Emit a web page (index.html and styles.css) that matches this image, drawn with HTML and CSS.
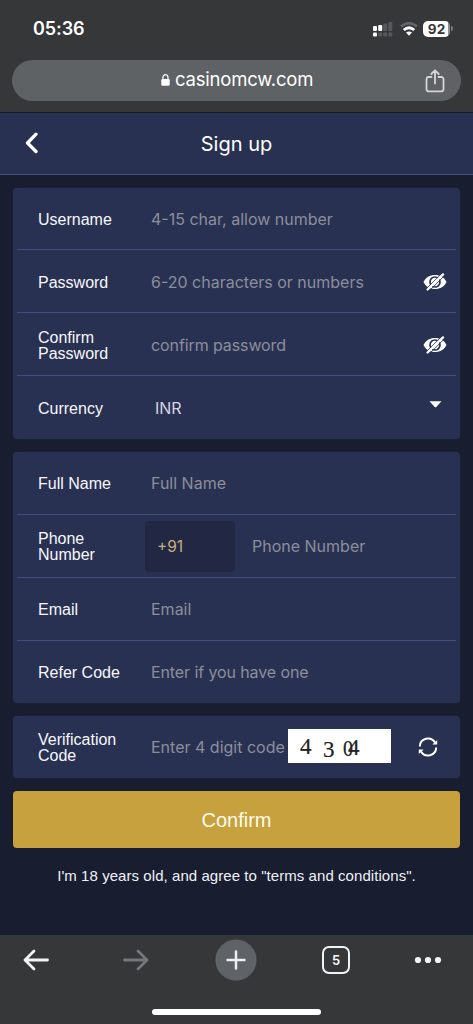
FILE: index.html
```html
<!DOCTYPE html>
<html lang="en">
<head>
<meta charset="utf-8">
<title>Sign up</title>
<link rel="stylesheet" href="styles.css">
</head>
<body>
<div class="phone">
  <div class="chrome-top">
    <div class="status">
      <span class="clock">05:36</span>
      <svg class="signal" width="20" height="16" viewBox="0 0 20 16">
        <g fill="#fff"><rect x="0" y="5" width="4" height="5" rx="1"/><rect x="5.2" y="4" width="4" height="6" rx="1"/><rect x="0" y="11.5" width="4" height="4" rx="1"/></g>
        <g fill="#55595c"><rect x="10.2" y="2.5" width="4" height="7.5" rx="1"/><rect x="15.3" y="1" width="4" height="9" rx="1"/><rect x="5.2" y="11.5" width="4" height="4" rx="1"/><rect x="10.2" y="11.5" width="4" height="4" rx="1"/><rect x="15.3" y="11.5" width="4" height="4" rx="1"/></g>
      </svg>
      <svg class="wifi" width="18" height="14" viewBox="0 0 18 14">
        <path d="M1 4.6Q9-2.2 17 4.6" fill="none" stroke="#62666a" stroke-width="2.6"/>
        <path d="M3.800 8Q9 3.400 14.200 8" fill="none" stroke="#fff" stroke-width="3"/>
        <path d="M9 13.800 6 10.600Q9 8.400 12 10.600Z" fill="#fff"/>
      </svg>
      <span class="battery">92</span><span class="battery-tip"></span>
    </div>
    <div class="address">
      <span class="address-site">
        <svg width="9" height="12" viewBox="0 0 9 12"><rect x="0.3" y="5" width="8.4" height="6.8" rx="1.2" fill="#fff"/><path d="M2 5.4V3.2a2.5 2.5 0 0 1 5 0v2.2" fill="none" stroke="#fff" stroke-width="1.2"/></svg>
        <span class="domain">casinomcw.com</span>
      </span>
      <svg class="share" width="20" height="24" viewBox="0 0 20 24" fill="none" stroke="#d4d6d8" stroke-width="1.8" stroke-linecap="round" stroke-linejoin="round"><path d="M6.5 8H3.2A2.2 2.2 0 0 0 1.500 10.2v10A2.2 2.2 0 0 0 3.700 22.400h12.600a2.200 2.200 0 0 0 2.200-2.200v-10A2.200 2.200 0 0 0 16.300 8H13.500M10 14.500V1.500M6.300 5 10 1.300 13.700 5"/></svg>
    </div>
  </div>

  <header class="title-bar">
    <svg class="back" width="13" height="22" viewBox="0 0 13 22"><path d="M11 2.200 2.500 11 11 19.500" fill="none" stroke="#fff" stroke-width="3.300" stroke-linecap="round" stroke-linejoin="round"/></svg>
    <h1 class="title">Sign up</h1>
  </header>

  <main class="page">
    <section class="card card-account">
      <div class="row"><label class="label">Username</label><span class="hint">4-15 char, allow number</span></div>
      <div class="row"><label class="label">Password</label><span class="hint">6-20 characters or numbers</span>
        <svg class="eye" width="24" height="18" viewBox="0 0 24 18"><path d="M.5 9C2.500 4.500 7 2 12 2s9.500 2.500 11.500 7c-2 4.500-6.500 7-11.500 7S2.500 13.500.5 9Z" fill="#fff"/><circle cx="12" cy="9" r="5" fill="none" stroke="#293152" stroke-width="1.700"/><path d="M3 16 19 .2M6 18.200 21.600 2.600" stroke="#293152" stroke-width=".9"/><path d="M4.600 16.500 20 1.400" stroke="#fff" stroke-width="2.300" stroke-linecap="round"/></svg>
      </div>
      <div class="row"><label class="label">Confirm Password</label><span class="hint hint-confirm">confirm password</span>
        <svg class="eye" width="24" height="18" viewBox="0 0 24 18"><path d="M.5 9C2.500 4.500 7 2 12 2s9.500 2.500 11.500 7c-2 4.500-6.500 7-11.500 7S2.500 13.500.5 9Z" fill="#fff"/><circle cx="12" cy="9" r="5" fill="none" stroke="#293152" stroke-width="1.700"/><path d="M3 16 19 .2M6 18.200 21.600 2.600" stroke="#293152" stroke-width=".9"/><path d="M4.600 16.500 20 1.400" stroke="#fff" stroke-width="2.300" stroke-linecap="round"/></svg>
      </div>
      <div class="row"><label class="label">Currency</label><span class="hint currency">INR</span>
        <svg class="caret" width="13" height="7" viewBox="0 0 13 7"><path d="M.5.300h12L7.300 6Q6.500 6.800 5.700 6Z" fill="#fff"/></svg>
      </div>
    </section>

    <section class="card">
      <div class="row"><label class="label">Full Name</label><span class="hint">Full Name</span></div>
      <div class="row"><label class="label">Phone Number</label><span class="prefix">+91</span><span class="hint">Phone Number</span></div>
      <div class="row"><label class="label">Email</label><span class="hint">Email</span></div>
      <div class="row"><label class="label">Refer Code</label><span class="hint hint-refer">Enter if you have one</span></div>
    </section>

    <section class="card">
      <div class="row"><label class="label">Verification Code</label><span class="hint">Enter 4 digit code</span>
        <svg class="captcha" width="103" height="34" viewBox="0 0 103 34"><rect width="103" height="34" fill="#fff"/><g class="captcha-digits"><text x="12" y="25">4</text><text x="35" y="28">3</text><text x="55" y="27" textLength="10" lengthAdjust="spacingAndGlyphs">0</text><text x="60" y="26">4</text></g></svg>
        <svg class="refresh" width="20" height="20" viewBox="0 0 20 20"><g fill="none" stroke="#fff" stroke-width="2"><path d="M1.800 9.500A8.200 8.200 0 0 1 17 5.500"/><path d="M18.200 10.500A8.200 8.200 0 0 1 3 14.500"/></g><path d="M19.200 3v4.600l-4.800-.2ZM.8 17v-4.600l4.800.2Z" fill="#fff"/></svg>
      </div>
    </section>

    <button class="confirm">Confirm</button>
    <p class="terms">I'm 18 years old, and agree to "terms and conditions".</p>
  </main>

  <footer class="chrome-bottom">
    <nav class="tools">
      <svg width="28" height="24" viewBox="0 0 28 24" fill="none" stroke="#f1f3f4" stroke-width="2.800" stroke-linecap="round" stroke-linejoin="round"><path d="M25.500 12H3M12 3 3 12 12 21"/></svg>
      <svg width="28" height="24" viewBox="0 0 28 24" fill="none" stroke="#75787b" stroke-width="2.800" stroke-linecap="round" stroke-linejoin="round"><path d="M2.500 12H25M16 3 25 12 16 21"/></svg>
      <svg width="42" height="42" viewBox="0 0 42 42"><circle cx="21" cy="21" r="20.600" fill="#5f6368"/><path d="M21 12.500v17M12.500 21h17" stroke="#eceef0" stroke-width="2.500" stroke-linecap="round"/></svg>
      <span class="tabs">5</span>
      <svg width="28" height="8" viewBox="0 0 28 8" fill="#f1f3f4"><circle cx="4" cy="4" r="3.100"/><circle cx="14" cy="4" r="3.100"/><circle cx="24" cy="4" r="3.100"/></svg>
    </nav>
    <div class="home"></div>
  </footer>
</div>
</body>
</html>
```
FILE: styles.css
```css
* { box-sizing: border-box; }
body { margin: 0; background: #181d30; font-family: "Liberation Sans", Arial, sans-serif; color: #fff; }
.phone { width: 473px; height: 1024px; display: flex; flex-direction: column; overflow: hidden; }
.phone svg { display: block; flex: none; }

.chrome-top { height: 113px; flex: none; background: #353739; border-bottom: 1px solid #171c2b; }
.status { height: 60px; display: flex; align-items: center; padding: 0 20px 3px 33px; }
.clock { flex: 1; font: 600 18px/24px Inter, sans-serif; letter-spacing: -.1px; }
.signal { margin: 0 7px 0 0; }
.wifi { margin-right: 5px; }
.battery { width: 27px; height: 16px; border-radius: 5px; background: linear-gradient(90deg, #fff 92%, #8c8e90 92%); color: #353739; font: 700 13.5px/16px Inter, sans-serif; text-align: center; }
.battery-tip { width: 2px; height: 5px; margin-left: 1px; border-radius: 0 2px 2px 0; background: #7b7d7f; }
.address { height: 41px; margin: 0 12px; padding: 0 16px 0 149px; border-radius: 21px; background: #5e6265; display: flex; align-items: center; justify-content: space-between; }
.address-site { display: flex; align-items: center; gap: 5px; }
.address-site svg { margin-top: -2px; }
.domain { font: 400 18.500px/24px Inter, sans-serif; letter-spacing: -.2px; margin-top: -3px; }

.title-bar { height: 62px; flex: none; background: #293152; border-bottom: 1px solid #465384; display: grid; grid-template-columns: 39px 1fr 39px; align-items: center; }
.back { margin: -2px 0 0 25px; }
.title { margin: 0; text-align: center; font: 400 20px/26px Inter, sans-serif; }

.page { flex: 1; padding: 13px 13px 0; display: flex; flex-direction: column; gap: 13px; }
.card { background: #293152; border-radius: 4px; padding: 0 4px; flex: none; box-shadow: 0 0 2px #252b45; }
.row { height: 63px; display: flex; align-items: center; padding-left: 21px; border-bottom: 1px solid #424f7e; }
.row:last-child { border-bottom: 0; height: 62px; }
.card-account .row { padding-top: 2px; }
.card-account .row:first-child { height: 62px; padding-top: 1px; }
.card-account .row:last-child { height: 63px; padding-top: 1px; }
.label { width: 113px; padding: 2px 15px 0 0; flex: none; font-size: 16px; line-height: 16px; color: #f7f8fc; }
.hint { font: 400 16px/20px Inter, sans-serif; color: #8b8e9b; white-space: nowrap; }
.hint-confirm, .hint-refer { letter-spacing: -.1px; }
.currency { margin-left: 4px; color: #d3d6e0; }
.eye { margin: 0 9px 0 auto; }
.caret { margin: -8px 14px 0 auto; }
.prefix { width: 90px; height: 51px; margin: 0 17px 0 -6px; padding-left: 12px; border-radius: 4px; background: #222843; color: #c8ad7d; font: 400 15.500px/51px Inter, sans-serif; }
.captcha { margin: -2px 27px 0 auto; }
.captcha-digits { font: 23px "Liberation Serif", serif; fill: #222; stroke: #222; stroke-width: .2px; }
.refresh { margin-right: 18px; }
.confirm { height: 57px; flex: none; border: 0; border-radius: 4px; background: #c6a13d; color: #fffbea; font: 400 20px/56px "Liberation Sans", Arial, sans-serif; padding: 0; }
.terms { margin: 4px 0 0; text-align: center; font-size: 15px; line-height: 22px; letter-spacing: .06px; color: #f0f1f6; white-space: nowrap; }

.chrome-bottom { height: 89px; flex: none; background: #353739; }
.tools { height: 50px; display: flex; align-items: center; padding: 0 31px 0 22px; }
.tools > :nth-child(2) { margin-left: 72px; }
.tools > :nth-child(3) { margin-left: 65px; }
.tools > :nth-child(4) { margin-left: 65px; }
.tools > :nth-child(5) { margin-left: auto; }
.tabs { width: 28px; height: 28px; border: 2.500px solid #f1f3f4; border-radius: 7px; text-align: center; font: 600 13px/24px Inter, sans-serif; }
.home { width: 169px; height: 6px; margin: 24px auto 0; border-radius: 3px; background: #fff; }
```
